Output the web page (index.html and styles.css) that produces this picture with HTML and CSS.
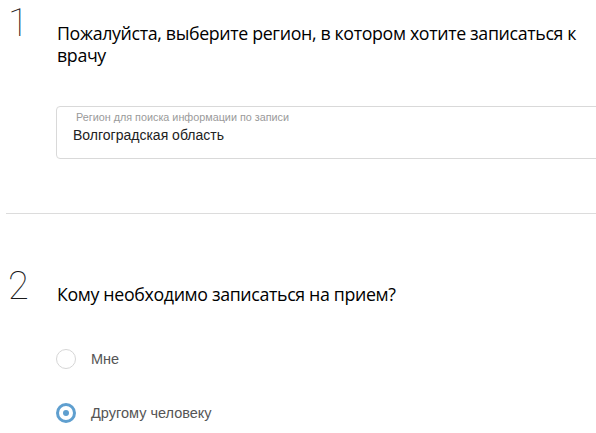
FILE: index.html
```html
<!DOCTYPE html>
<html lang="ru">
<head>
<meta charset="utf-8">
<link rel="stylesheet" href="styles.css">
</head>
<body>
<section class="step step-first">
  <div class="step-head">
    <div class="num">1</div>
    <h2 class="title">Пожалуйста, выберите регион, в котором хотите записаться к врачу</h2>
  </div>
  <div class="field">
    <div class="field-label">Регион для поиска информации по записи</div>
    <div class="field-value">Волгоградская область</div>
  </div>
</section>
<hr class="divider">
<section class="step step-second">
  <div class="step-head">
    <div class="num">2</div>
    <h2 class="title">Кому необходимо записаться на прием?</h2>
  </div>
  <div class="options">
    <label class="option"><span class="radio"></span><span class="option-text">Мне</span></label>
    <label class="option"><span class="radio radio-checked"></span><span class="option-text">Другому человеку</span></label>
  </div>
</section>
</body>
</html>
```

FILE: styles.css
```css
html, body {
  margin: 0;
  padding: 0;
  background: #fff;
  overflow: hidden;
}
body {
  font-family: "Open Sans", "Liberation Sans", sans-serif;
  color: #000;
}
.step-head {
  display: flex;
  align-items: flex-start;
  padding-top: 4px;
}
.num {
  flex: none;
  width: 37px;
  text-align: center;
  font-family: Roboto, "Liberation Sans", sans-serif;
  font-weight: 100;
  font-size: 38px;
  line-height: 38px;
  color: #1a1a1a;
}
.title {
  flex: 1;
  margin: 18px 0 0 20px;
  font-size: 17.8px;
  letter-spacing: -0.35px;
  line-height: 22px;
  font-weight: 400;
  color: #000;
}
.field {
  margin: 40px -20px 0 56px;
  border: 1px solid #d9d9d9;
  border-radius: 4px;
  padding: 4px 0 14px 0;
}
.field-label {
  font-family: "Liberation Sans", Arial, sans-serif;
  font-size: 10.8px;
  line-height: 12px;
  color: #9a9a9a;
  padding-left: 19px;
}
.field-value {
  font-family: "Liberation Sans", Arial, sans-serif;
  font-size: 14px;
  line-height: 18px;
  color: #222;
  margin-top: 3px;
  padding-left: 16px;
}
.divider {
  margin: 54px 0 0 6px;
  border: 0;
  border-top: 1px solid #dcdcdc;
  height: 0;
}
.step-second .step-head {
  padding-top: 53px;
}
.step-second .title {
  margin-top: 16px;
}
.options {
  display: flex;
  flex-direction: column;
  gap: 34px;
  margin: 44px 0 0 56px;
}
.option {
  display: flex;
  align-items: center;
  height: 20px;
}
.radio {
  box-sizing: border-box;
  width: 20px;
  height: 20px;
  border-radius: 50%;
  border: 1px solid #d6d6d6;
  background: #fff;
  position: relative;
  flex: none;
}
.radio-checked {
  border: 3px solid #5f9fcf;
}
.radio-checked::after {
  content: "";
  position: absolute;
  left: 4px;
  top: 4px;
  width: 6px;
  height: 6px;
  border-radius: 50%;
  background: #5f9fcf;
}
.option-text {
  margin-left: 15px;
  font-family: "Liberation Sans", Arial, sans-serif;
  font-size: 14.5px;
  color: #555;
}
```
